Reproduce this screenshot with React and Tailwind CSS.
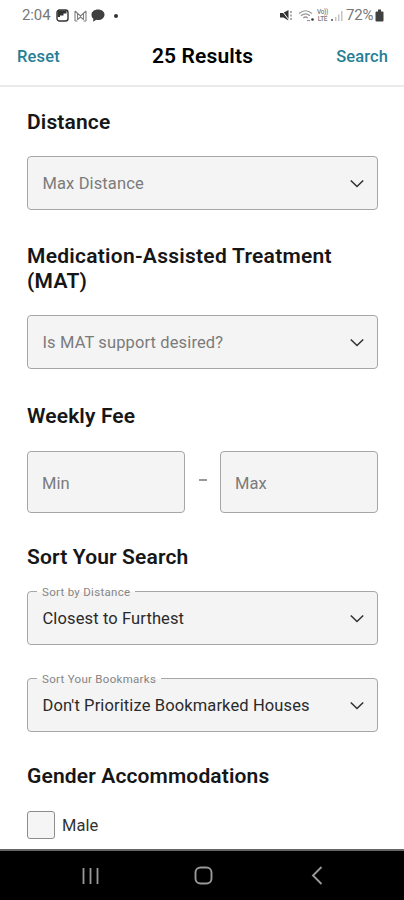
import * as React from "react";

export default function App() {
  return (
    <div className="flex h-[900px] w-[404px] flex-col overflow-hidden bg-white font-['Roboto',sans-serif] text-[#161616]">
      <StatusBar />
      <header className="flex h-[56px] shrink-0 items-center justify-between border-b-2 border-[#ebebeb] pr-[16px] pl-[17px] pb-[2px]">
        <button className="w-[60px] text-left text-[16.5px] font-medium tracking-[0.2px] text-[#257f95]">Reset</button>
        <h1 className="text-[21px] font-semibold tracking-[0.15px] text-black">25 Results</h1>
        <button className="w-[60px] text-right text-[16.5px] font-medium tracking-[0.1px] text-[#257f95]">Search</button>
      </header>

      <main className="flex min-h-0 flex-1 flex-col overflow-hidden pr-[26px] pl-[27px]">
        <Heading className="mt-[23px]">Distance</Heading>
        <Select className="mt-[21px] h-[54px]" placeholder="Max Distance" />

        <Heading className="mt-[34px] tracking-[0.26px]">Medication-Assisted Treatment (MAT)</Heading>
        <Select className="mt-[21px] h-[54px]" placeholder="Is MAT support desired?" />

        <Heading className="mt-[35px]">Weekly Fee</Heading>
        <div className="mt-[22px] flex shrink-0 items-center justify-between">
          <FeeInput label="Min" />
          <div className="mb-[4px] h-[2px] w-[8px] bg-[#999999]"></div>
          <FeeInput label="Max" />
        </div>

        <Heading className="mt-[32px]">Sort Your Search</Heading>
        <Select className="mt-[21px] h-[54px]" label="Sort by Distance" value="Closest to Furthest" />
        <Select className="mt-[33px] h-[54px]" label="Sort Your Bookmarks" value="Don't Prioritize Bookmarked Houses" />

        <Heading className="mt-[32px]">Gender Accommodations</Heading>
        <label className="mt-[22px] flex shrink-0 items-center gap-[7px]">
          <span className="size-[28px] rounded-[3px] border border-[#8c8c8c] bg-[#f5f5f5]"></span>
          <span className="pt-[2px] text-[16.5px] text-[#333333]">Male</span>
        </label>
      </main>

      <NavBar />
    </div>
  );
}

function Heading({ className, children }) {
  return (
    <h2 className={`shrink-0 text-[21px] leading-[25px] font-semibold ${className.includes("tracking") ? "" : "tracking-[0.14px]"} ${className}`}>
      {children}
    </h2>
  );
}

function Select({ className, label, value, placeholder }) {
  return (
    <div
      className={`relative flex shrink-0 items-center justify-between rounded-[4px] border-[1.5px] border-[#a6a6a6] bg-[#f4f4f4] pt-[2px] pr-[13px] pl-[14.5px] ${className}`}
    >
      {label && (
        <span className="absolute -top-[7px] left-[9px] bg-linear-to-b from-white from-50% to-[#f4f4f4] to-50% px-[5px] text-[11.5px] leading-[14px] tracking-[0.3px] text-[#858585]">
          {label}
        </span>
      )}
      {value ? (
        <span className="text-[16.5px] tracking-[0.12px] text-[#2a2a2a]">{value}</span>
      ) : (
        <span className="text-[16.5px] tracking-[0.12px] text-[#7b7b7b]">{placeholder}</span>
      )}
      <svg className="mb-[2px] h-[9px] w-[14px]" viewBox="0 0 14 9" fill="none" stroke="#333333" strokeWidth="1.6">
        <path d="M.8 1.500L7 7.500L13.200 1.500" />
      </svg>
    </div>
  );
}

function FeeInput({ label }) {
  return (
    <div className="flex h-[62px] w-[158px] items-center rounded-[4px] border-[1.5px] border-[#a6a6a6] bg-[#f4f4f4] px-[14px] pt-[5px] text-[16.5px] text-[#7b7b7b]">
      {label}
    </div>
  );
}

function StatusBar() {
  return (
    <div className="flex h-[31px] shrink-0 items-center justify-between pr-[20px] pl-[22px] text-[15px] text-[#777777]">
      <div className="flex items-center">
        <span className="w-[34px] tracking-[-0.1px]">2:04</span>
        {/* gallery */}
        <svg className="size-[13px]" viewBox="0 0 13 13">
          <rect x="1" y="1" width="11" height="11" rx="2.5" fill="none" stroke="#333333" strokeWidth="1.4" />
          <path d="M1.500 1.500h9v3H7.500v2H4v1.500H1.500z" fill="#333333" />
        </svg>
        {/* mail */}
        <svg className="ml-[5px] h-[12px] w-[13px]" viewBox="0 0 13 12" fill="none" stroke="#808080" strokeWidth="1.1">
          <path d="M1 1v10M12 1v10M3.500 3.500v6.500M9.500 3.500v6.500M1 1l5.500 5L12 1M3.500 9.500l3-2.500 3 2.500M1 11h2.500M9.500 11H12" />
        </svg>
        {/* chat */}
        <svg className="ml-[4px] h-[13px] w-[14px]" viewBox="0 0 14 13" fill="#404040">
          <path d="M7 .5c3.700 0 6.500 2.200 6.500 5.200S10.700 11 7 11c-.6 0-1.200 0-1.700-.2L2.200 12.700 2.300 9.600C1.100 8.700.5 7.300.5 5.700.5 2.700 3.300.5 7 .5z" />
        </svg>
        <span className="ml-[9px] size-[4px] rounded-full bg-[#333333]"></span>
      </div>

      <div className="flex items-center">
        {/* muted speaker */}
        <svg className="mr-[1px] h-[13px] w-[13px]" viewBox="0 0 13 13">
          <path d="M0 4h3L8.500 1v10.500L3.500 8.500H0z" fill="#333333" />
          <path d="M1 .5l8 10.500" stroke="white" strokeWidth="1" />
          <path d="M11 2v2M11 5.500v2M11 9v2" stroke="#777777" strokeWidth="1.2" />
        </svg>
        {/* wifi */}
        <svg className="ml-[4px] h-[14px] w-[17px]" viewBox="0 0 17 14" fill="none" stroke="#999999" strokeWidth="1.2">
          <path d="M1 4.500Q7.500-1 14 4.500M3 6.800Q7.500 3 12 6.800M5.300 9Q7.500 7 9.800 9" />
          <path d="M9 11.500h3" />
          <circle cx="14.500" cy="10.500" r="1.300" fill="#333333" stroke="none" />
        </svg>
        <span className="ml-[1px] flex w-[13px] flex-col text-center text-[6.5px] leading-[7px] font-medium tracking-[-0.3px] text-[#808080]">
          <span>Vo))</span>
          <span>LTE</span>
        </span>
        {/* signal */}
        <svg className="ml-[1px] h-[12px] w-[13px]" viewBox="0 0 13 12">
          <path d="M1 9h2v2H1z" fill="#777777" />
          <path d="M5 7h1.500v4H5zM8 4.500h1.500V11H8zM11 1h1.500v10H11z" fill="#c4c4c4" />
        </svg>
        <span className="ml-[3px] w-[29px] tracking-[-0.2px]">72%</span>
        {/* battery */}
        <svg className="h-[13px] w-[9px]" viewBox="0 0 9 13" fill="#404040">
          <path d="M3 .5h3v2h1.500Q8.500 2.500 8.500 3.500V11.500Q8.500 12.500 7.500 12.500H1.500Q.5 12.500.5 11.500V3.500Q.5 2.500 1.500 2.500H3z" />
        </svg>
      </div>
    </div>
  );
}

function NavBar() {
  return (
    <nav className="grid h-[51px] shrink-0 grid-cols-[181px_44px_1fr] items-center border-t-2 border-[#666666] bg-black">
      <svg className="ml-[82px] h-[18px] w-[17px]" viewBox="0 0 17 18" stroke="#999999" strokeWidth="1.8">
        <path d="M1.500 1v16M8.500 1v16M15.500 1v16" />
      </svg>
      <svg className="mx-auto size-[19px]" viewBox="0 0 19 19" fill="none" stroke="#999999" strokeWidth="1.9">
        <rect x="1.5" y="1.5" width="16" height="16" rx="5" />
      </svg>
      <svg className="ml-[86px] h-[19px] w-[12px]" viewBox="0 0 12 19" fill="none" stroke="#999999" strokeWidth="1.9">
        <path d="M10.500 1L2 9.500L10.500 18" />
      </svg>
    </nav>
  );
}
